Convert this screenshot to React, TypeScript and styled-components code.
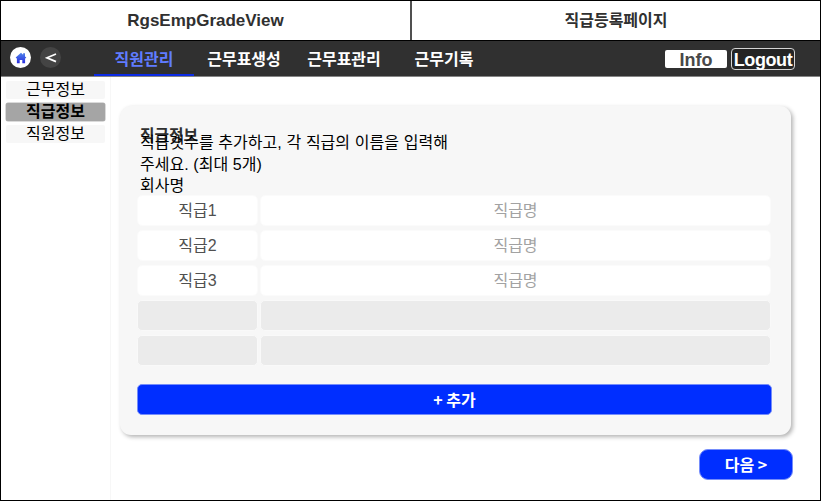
import React from 'react';
import styled, { createGlobalStyle } from 'styled-components';

const GlobalStyle = createGlobalStyle`
  * { box-sizing: border-box; }
  body {
    margin: 0;
    background: #fff;
    font-family: "Liberation Sans", "Noto Sans CJK KR", sans-serif;
    font-size: 16px;
    color: #000;
  }
  button, input { font: inherit; margin: 0; padding: 0; }
`;

const Frame = styled.div`
  width: 821px;
  height: 501px;
  border: 1px solid #000;
  display: flex;
  flex-direction: column;
  overflow: hidden;
`;

const TitleBar = styled.header`
  display: grid;
  grid-template-columns: 411px 1fr;
  height: 40px;
  flex: none;
  border-bottom: 1px solid #000;
`;

const TitleCell = styled.div<{ $divided?: boolean }>`
  display: flex;
  align-items: center;
  justify-content: center;
  line-height: 39px;
  font-size: ${(p) => (p.$divided ? '17px' : '16px')};
  font-weight: 700;
  color: #303030;
  border-right: ${(p) => (p.$divided ? '2px solid #505050' : 'none')};
`;

const NavBar = styled.nav`
  display: flex;
  height: 36px;
  flex: none;
  padding: 0 25px 0 9px;
  background: #303030;
  border-bottom: 1px solid #858585;
`;

const RoundButton = styled.button<{ $light?: boolean }>`
  display: flex;
  align-items: center;
  justify-content: center;
  width: 21px;
  height: 21px;
  margin: 6px 9px 0 0;
  border: 0;
  border-radius: 50%;
  background: ${(p) => (p.$light ? '#fff' : '#444')};
`;

const Tabs = styled.div`
  display: flex;
  margin-left: 24px;
`;

const Tab = styled.a<{ $active?: boolean }>`
  width: 100px;
  height: 35px;
  text-align: center;
  line-height: 38px;
  font-weight: 700;
  color: ${(p) => (p.$active ? '#607cff' : '#fff')};
  border-bottom: ${(p) => (p.$active ? '2px solid #0c2be4' : 'none')};
`;

const Account = styled.div`
  display: flex;
  margin: 7px 0 0 auto;
  gap: 4px;
`;

const InfoButton = styled.button`
  width: 62px;
  height: 18px;
  margin-top: 2px;
  border: 0;
  border-radius: 2px;
  background: #fff;
  color: #484848;
  font-size: 18px;
  font-weight: 700;
  line-height: 20px;
`;

const LogoutButton = styled.button`
  width: 64px;
  height: 22px;
  border: 1px solid #d5d5d5;
  border-radius: 4px;
  background: #242424;
  color: #fff;
  font-size: 18px;
  letter-spacing: -0.4px;
  font-weight: 700;
  line-height: 22px;
`;

const Body = styled.div`
  display: flex;
  flex: 1;
`;

const Sidebar = styled.aside`
  width: 110px;
  display: flex;
  flex-direction: column;
  gap: 4px;
  padding: 4px 5px 0 5px;
  border-right: 1px solid #f7f7f7;
`;

const SideItem = styled.a<{ $active?: boolean }>`
  height: 18px;
  line-height: 18px;
  text-align: center;
  border-radius: 2px;
  font-weight: ${(p) => (p.$active ? 700 : 400)};
  background: ${(p) => (p.$active ? '#a5a5a5' : '#f7f7f7')};
  box-shadow: ${(p) => (p.$active ? '0 0 0 0.5px #b5b5b5' : 'none')};
`;

const Main = styled.main`
  flex: 1;
  display: flex;
  flex-direction: column;
  align-items: flex-start;
  padding: 29px 0 0 9px;
`;

const Card = styled.section`
  width: 671px;
  height: 329px;
  padding: 19px 19px 0 17px;
  border-radius: 11px;
  background: #f7f7f7;
  box-shadow: 2px 2px 4px rgba(0, 0, 0, 0.3);
`;

const CardTitle = styled.h1`
  margin: 0 0 0 3px;
  height: 7px;
  font-size: 15.8px;
  line-height: 22px;
  color: #303030;
`;

const CardText = styled.p`
  width: 320px;
  margin: 0 0 0 3px;
  line-height: 21.5px;
  word-spacing: 0.3px;
`;

const Grades = styled.div`
  display: grid;
  grid-template-columns: 121px 511px;
  grid-auto-rows: 31px;
  column-gap: 2px;
  row-gap: 4px;
  margin-top: -2px;
`;

const GradeLabel = styled.div<{ $empty?: boolean }>`
  border: 1px solid ${(p) => (p.$empty ? '#f9f9f9' : '#fbfbfb')};
  border-radius: 5px;
  background: ${(p) => (p.$empty ? '#ebebeb' : '#fff')};
  color: #505050;
  text-align: center;
  line-height: 29px;
`;

const GradeInput = styled.input`
  width: 100%;
  border: 1px solid #fbfbfb;
  border-radius: 5px;
  background: #fff;
  text-align: center;
  outline: none;
  padding-top: 1px;
  &::placeholder { color: #a2a2a2; opacity: 1; }
  &:disabled { background: #ebebeb; border-color: #f9f9f9; }
`;

const PrimaryButton = styled.button`
  height: 31px;
  border: 1px solid #758dfb;
  background: #002eff;
  color: #fff;
  font-family: "Noto Sans CJK KR", sans-serif;
  font-weight: 700;
  line-height: 29px;
`;

const AddButton = styled(PrimaryButton)`
  width: 635px;
  margin-top: 18px;
  border-radius: 5px;
`;

const NextButton = styled(PrimaryButton)`
  width: 94px;
  margin: 14px 0 0 579px;
  border-radius: 9px;
`;

const HomeIcon = () => (
  <svg width="12" height="12" viewBox="0 0 12 12">
    <defs>
      <linearGradient id="homeFill" x1="0" y1="0" x2="0" y2="1">
        <stop offset="0" stopColor="#4f83e8" />
        <stop offset="1" stopColor="#2a2ee0" />
      </linearGradient>
    </defs>
    <path
      d="M6 .8.7 5.6l.7.9.5-.4v5.1h2.8V7.9h2.6v3.3h2.8V6.1l.5.4.7-.9-1.3-1.2V1.3H8.1v1.4Z"
      fill="url(#homeFill)"
    />
  </svg>
);

const BackIcon = () => (
  <svg width="12" height="12" viewBox="0 0 12 12">
    <path d="M11 2 2 5.8 11 9.6" fill="none" stroke="#fff" strokeWidth="1.7" />
  </svg>
);

const grades = ['직급1', '직급2', '직급3', '', ''];

export default function App() {
  return (
    <>
      <GlobalStyle />
      <Frame>
        <TitleBar>
          <TitleCell $divided>RgsEmpGradeView</TitleCell>
          <TitleCell>직급등록페이지</TitleCell>
        </TitleBar>
        <NavBar>
          <RoundButton $light aria-label="Home"><HomeIcon /></RoundButton>
          <RoundButton aria-label="Back"><BackIcon /></RoundButton>
          <Tabs>
            <Tab $active>직원관리</Tab>
            <Tab>근무표생성</Tab>
            <Tab>근무표관리</Tab>
            <Tab>근무기록</Tab>
          </Tabs>
          <Account>
            <InfoButton>Info</InfoButton>
            <LogoutButton>Logout</LogoutButton>
          </Account>
        </NavBar>
        <Body>
          <Sidebar>
            <SideItem>근무정보</SideItem>
            <SideItem $active>직급정보</SideItem>
            <SideItem>직원정보</SideItem>
          </Sidebar>
          <Main>
            <Card>
              <CardTitle>직급정보</CardTitle>
              <CardText>
                직급갯수를 추가하고, 각 직급의 이름을 입력해주세요. (최대 5개)
                <br />
                회사명
              </CardText>
              <Grades>
                {grades.map((grade, i) => (
                  <React.Fragment key={i}>
                    <GradeLabel $empty={!grade}>{grade}</GradeLabel>
                    <GradeInput placeholder={grade ? '직급명' : ''} disabled={!grade} />
                  </React.Fragment>
                ))}
              </Grades>
              <AddButton>+ 추가</AddButton>
            </Card>
            <NextButton>다음 &gt;</NextButton>
          </Main>
        </Body>
      </Frame>
    </>
  );
}
